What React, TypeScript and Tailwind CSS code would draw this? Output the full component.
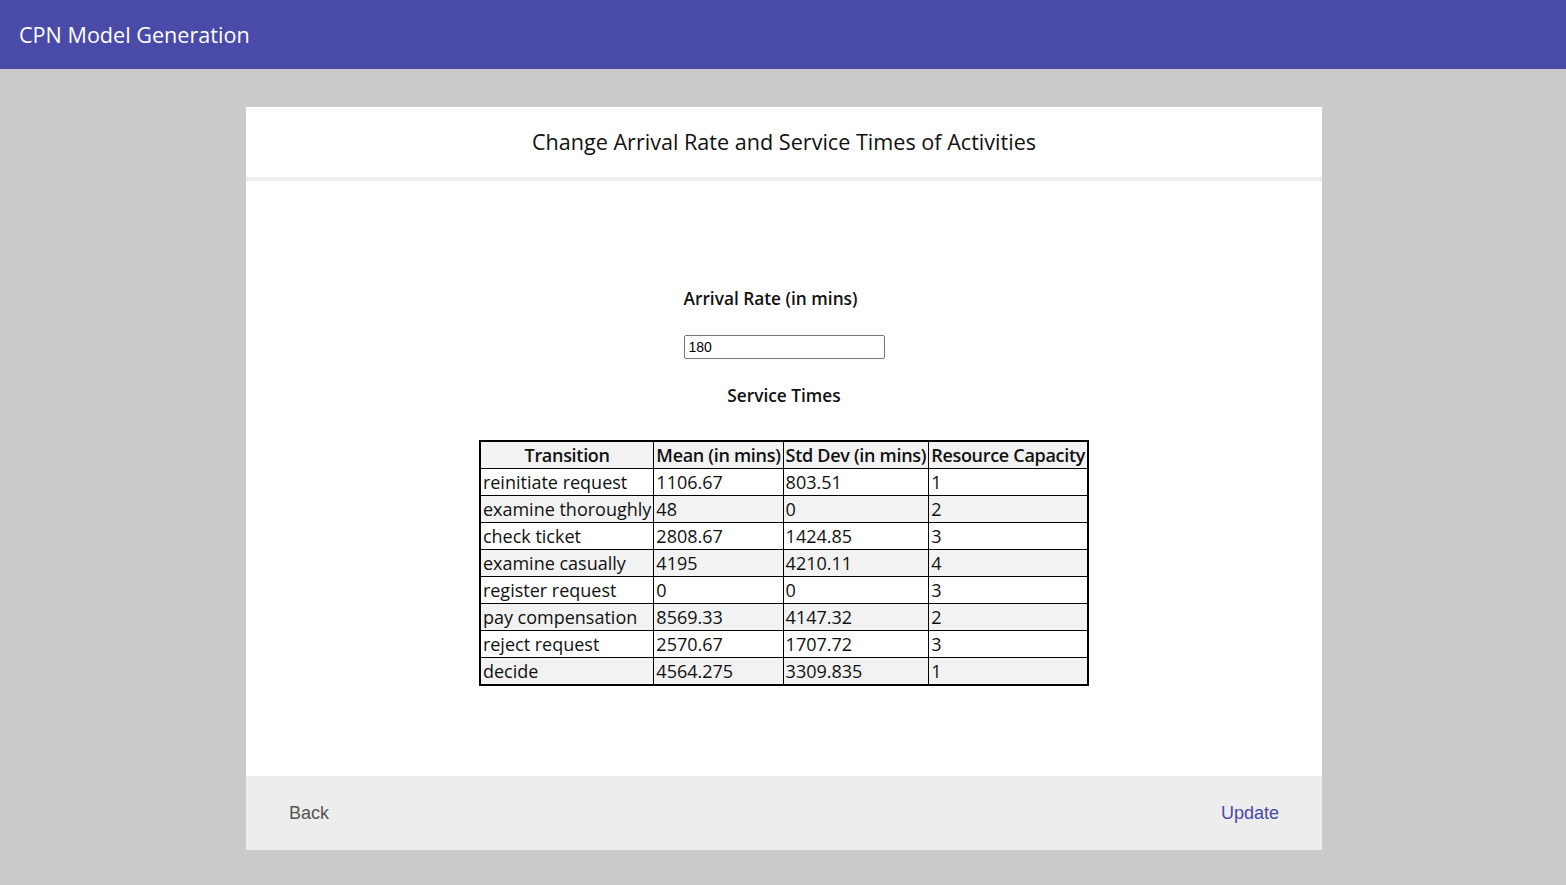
import React from "react";

const rows = [
  ["reinitiate request", "1106.67", "803.51", "1"],
  ["examine thoroughly", "48", "0", "2"],
  ["check ticket", "2808.67", "1424.85", "3"],
  ["examine casually", "4195", "4210.11", "4"],
  ["register request", "0", "0", "3"],
  ["pay compensation", "8569.33", "4147.32", "2"],
  ["reject request", "2570.67", "1707.72", "3"],
  ["decide", "4564.275", "3309.835", "1"],
];

export default function App() {
  return (
    <div className="min-h-[885px] bg-[#cacaca] font-['Open_Sans',sans-serif]">
      <div className="h-[69px] bg-[#4a4aa9] flex items-center px-[19px]">
        <span className="text-white text-[21.6px] leading-none">CPN Model Generation</span>
      </div>
      <div className="pt-[38px] pl-[2px] flex justify-center">
        <div className="w-[1076px] bg-white">
          <div className="h-[74px] flex items-center justify-center border-b-4 border-[#eeeeee]">
            <span className="text-[21.6px] text-[#111]">Change Arrival Rate and Service Times of Activities</span>
          </div>
          <div className="h-[595px] flex flex-col items-center pt-[106px]">
            <div className="w-[201px] flex flex-col items-start">
              <div className="text-[17.3px] leading-[24px] font-semibold text-[#111] whitespace-nowrap">Arrival Rate (in mins)</div>
              <input
                defaultValue="180"
                className="mt-[24px] w-[201px] h-[24px] border border-[#767676] rounded-[2px] px-[4px] text-[14px] font-['Liberation_Sans',Arial,sans-serif] text-black outline-none"
              />
            </div>
            <div className="mt-[25px] text-[17.3px] leading-[24px] font-semibold text-[#111]">Service Times</div>
            <table className="mt-[32px] border-collapse border-2 border-black text-[18px] leading-[24px] text-[#111]">
              <tbody>
                <tr className="bg-[#f2f2f2]">
                  {["Transition", "Mean (in mins)", "Std Dev (in mins)", "Resource Capacity"].map((h) => (
                    <th key={h} className="border border-black font-semibold tracking-[-0.3px] px-[2px] py-[1px] text-center whitespace-nowrap">
                      {h}
                    </th>
                  ))}
                </tr>
                {rows.map((r, i) => (
                  <tr key={i} className={i % 2 === 1 ? "bg-[#f2f2f2]" : "bg-white"}>
                    {r.map((c, j) => (
                      <td key={j} className="border border-black px-[2px] py-[1px] text-left whitespace-nowrap">
                        {c}
                      </td>
                    ))}
                  </tr>
                ))}
              </tbody>
            </table>
          </div>
          <div className="h-[74px] bg-[#ededed] flex items-center justify-between px-[43px] font-['Liberation_Sans',Arial,sans-serif] text-[18px]">
            <span className="text-[#555555]">Back</span>
            <span className="text-[#4a4aa9]">Update</span>
          </div>
        </div>
      </div>
    </div>
  );
}
